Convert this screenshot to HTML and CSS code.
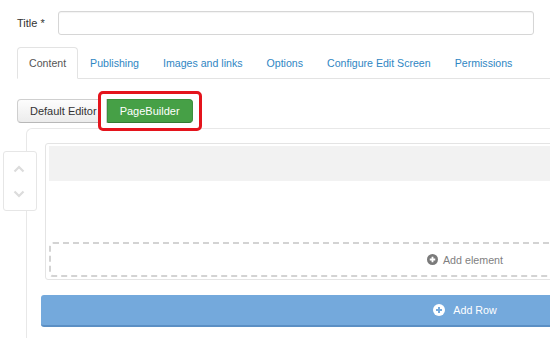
FILE: index.html
```html
<!DOCTYPE html>
<html>
<head>
<meta charset="utf-8">
<link rel="stylesheet" href="styles.css">
</head>
<body>
  <div class="title-row">
    <label class="title-label">Title *</label>
    <div class="title-input"></div>
  </div>

  <ul class="tabs">
    <li class="tab active"><a>Content</a></li>
    <li class="tab"><a>Publishing</a></li>
    <li class="tab"><a>Images and links</a></li>
    <li class="tab"><a>Options</a></li>
    <li class="tab"><a>Configure Edit Screen</a></li>
    <li class="tab"><a>Permissions</a></li>
  </ul>

  <div class="btn-group">
    <span class="btn btn-default">Default Editor</span>
    <span class="btn btn-green">PageBuilder<span class="highlight"></span></span>
  </div>

  <div class="builder">
    <div class="row-box">
      <div class="row-handle">
        <svg class="chev" viewBox="0 0 12 8" width="12" height="8"><path d="M1.5 6.5 L6 2 L10.5 6.5" fill="none" stroke="#dcdcdc" stroke-width="2.2"/></svg>
        <svg class="chev" viewBox="0 0 12 8" width="12" height="8"><path d="M1.5 1.5 L6 6 L10.5 1.5" fill="none" stroke="#dcdcdc" stroke-width="2.2"/></svg>
      </div>
      <div class="row-bar"></div>
      <div class="add-element">
        <svg class="plus-icon" viewBox="0 0 12 12" width="11" height="11"><circle cx="6" cy="6" r="6" fill="#7a7a7a"/><path d="M6 3 V9 M3 6 H9" stroke="#fff" stroke-width="2"/></svg>
        <span>Add element</span>
      </div>
    </div>
    <div class="add-row">
      <svg class="plus-icon" viewBox="0 0 12 12" width="12" height="12"><circle cx="6" cy="6" r="6" fill="#fff"/><path d="M6 3 V9 M3 6 H9" stroke="#74a9dc" stroke-width="2"/></svg>
      <span>Add Row</span>
    </div>
  </div>
</body>
</html>
```
FILE: styles.css
```css
html, body {
  overflow: hidden;
}
body {
  margin: 0;
  padding: 11px 0 0 17px;
  font-family: "Liberation Sans", Arial, sans-serif;
  color: #333;
  background: #fff;
}
.title-row {
  display: flex;
  align-items: center;
  margin-right: 16px;
}
.title-label {
  width: 41px;
  font-size: 11px;
  color: #333;
}
.title-input {
  flex: 1;
  height: 22px;
  border: 1px solid #d6d6d6;
  border-radius: 3px;
  box-shadow: inset 0 1px 1px rgba(0,0,0,0.05);
}
.tabs {
  display: flex;
  list-style: none;
  margin: 12px 0 0;
  padding: 0;
  border-bottom: 1px solid #e3e3e3;
}
.tab {
  margin-bottom: -1px;
}
.tab a {
  display: block;
  padding: 0 11px;
  line-height: 30px;
  font-size: 10.6px;
  color: #2f86c3;
  border: 1px solid transparent;
  border-radius: 4px 4px 0 0;
}
.tab.active a {
  color: #555;
  background: #fff;
  border-color: #e3e3e3 #e3e3e3 #fff;
}
.btn-group {
  display: flex;
  margin-top: 20px;
}
.btn {
  display: block;
  white-space: nowrap;
  font-size: 11px;
  line-height: 22px;
  padding: 0 12px;
  border: 1px solid #cfcfcf;
}
.btn-default {
  color: #333;
  background: linear-gradient(#fdfdfd, #ececec);
  border-radius: 4px 0 0 4px;
  border-bottom-color: #b8b8b8;
  padding-right: 9px;
}
.btn-green {
  position: relative;
  color: #fff;
  background: #46a046;
  border-color: #3d8f3d #3d8f3d #327a32;
  border-radius: 0 4px 4px 0;
}
.highlight {
  position: absolute;
  left: -10px;
  right: -10px;
  top: -9px;
  bottom: -9px;
  border: 3px solid #e4141c;
  border-radius: 5px;
  box-shadow: inset 0 0 0 5px #fff;
  z-index: 2;
}
.builder {
  margin: 5px 0 0 9px;
  width: 848px;
  padding: 14px 0 20px 14px;
  border-top: 1px solid #e8e8e8;
  border-left: 1px solid #e8e8e8;
  border-radius: 6px 0 0 0;
}
.row-box {
  position: relative;
  margin: 0 4px;
  padding: 2px 3px 2px;
  border: 1px solid #e4e4e4;
  border-radius: 3px;
}
.row-handle {
  position: absolute;
  left: -43px;
  top: 7px;
  width: 30px;
  height: 58px;
  border: 1px solid #e6e6e6;
  border-radius: 3px;
  background: #fff;
  display: flex;
  flex-direction: column;
  align-items: center;
  justify-content: center;
  gap: 17px;
  padding-left: 2px;
  box-sizing: content-box;
}
.chev {
  display: block;
  margin-left: -4px;
}
.row-bar {
  height: 35px;
  background: #f2f2f2;
}
.add-element {
  margin-top: 61px;
  height: 31px;
  border: 2px dashed #d3d3d3;
  border-radius: 4px;
  display: flex;
  align-items: center;
  justify-content: center;
  gap: 5px;
  font-size: 10.7px;
  color: #7f7f7f;
}
.add-row {
  margin-top: 15px;
  height: 30px;
  background: #74a9dc;
  border-bottom: 2px solid #5b8fc4;
  border-radius: 3px;
  display: flex;
  align-items: center;
  justify-content: center;
  gap: 8px;
  font-size: 10.7px;
  color: #fff;
}
.plus-icon {
  display: block;
}
```
